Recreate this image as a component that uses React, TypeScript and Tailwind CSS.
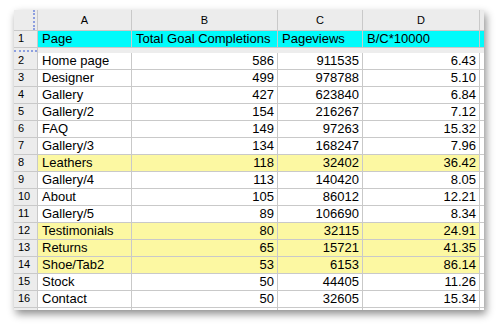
const rows: [number, string, string, string, string, boolean][] = [
  [2, 'Home page', '586', '911535', '6.43', false],
  [3, 'Designer', '499', '978788', '5.10', false],
  [4, 'Gallery', '427', '623840', '6.84', false],
  [5, 'Gallery/2', '154', '216267', '7.12', false],
  [6, 'FAQ', '149', '97263', '15.32', false],
  [7, 'Gallery/3', '134', '168247', '7.96', false],
  [8, 'Leathers', '118', '32402', '36.42', true],
  [9, 'Gallery/4', '113', '140420', '8.05', false],
  [10, 'About', '105', '86012', '12.21', false],
  [11, 'Gallery/5', '89', '106690', '8.34', false],
  [12, 'Testimonials', '80', '32115', '24.91', true],
  [13, 'Returns', '65', '15721', '41.35', true],
  [14, 'Shoe/Tab2', '53', '6153', '86.14', true],
  [15, 'Stock', '50', '44405', '11.26', false],
  [16, 'Contact', '50', '32605', '15.34', false],
];

const grid = 'grid grid-cols-[24px_94px_146px_85px_117px_4px]';
const line = 'border-r border-b border-[#c9c9c9]';

export default function App() {
  return (
    <div className="h-[329px] w-[500px] overflow-hidden bg-white pl-[14px] pt-[10px] font-['Liberation_Sans',Arial,sans-serif] text-black">
      <div className="w-[470px] bg-[#ececec] shadow-[2px_4px_8px_rgba(0,0,0,0.45)]">
        {/* column letters */}
        <div className={`${grid} h-[21px] text-[11px]`}>
          <div className={`relative ${line} bg-[#ececec]`}>
            <div className="absolute right-[2px] top-0 h-full border-l-2 border-dotted border-[#8d9fe0]" />
          </div>
          {['A', 'B', 'C', 'D'].map((c) => (
            <div key={c} className={`${line} flex items-center justify-center bg-[#ececec]`}>
              {c}
            </div>
          ))}
          <div className="border-b border-[#c9c9c9] bg-[#ececec]" />
        </div>

        {/* row 1: titles */}
        <div className={`${grid} h-[17px]`}>
          <div className={`${line} bg-[#ececec] pl-[4px] text-[11px] leading-[14px]`}>1</div>
          {['Page', 'Total Goal Completions', 'Pageviews', 'B/C*10000'].map((t) => (
            <div key={t} className={`${line} overflow-hidden whitespace-nowrap bg-[#00fbfb] pl-[4px] text-[13px] leading-[16px]`}>
              {t}
            </div>
          ))}
          <div className="border-b border-[#c9c9c9] bg-[#00fbfb]" />
        </div>

        {/* frozen pane divider */}
        <div className={`${grid} h-[5px]`}>
          <div className="relative border-r border-[#c9c9c9]">
            <div className="absolute left-0 top-[2px] w-full border-t-2 border-dotted border-[#8d9fe0]" />
          </div>
          <div className="col-span-5 bg-[#ededed]" />
        </div>

        {rows.map(([n, page, goals, views, ratio, hl]) => {
          const bg = hl ? 'bg-[#fcf8a2]' : 'bg-white';
          return (
            <div key={n} className={`${grid} h-[17px] text-[13px] leading-[16px]`}>
              <div className={`${line} bg-[#ececec] pl-[4px] text-[11px] leading-[14px]`}>{n}</div>
              <div className={`${line} ${bg} pl-[4px]`}>{page}</div>
              <div className={`${line} ${bg} pr-[3px] text-right`}>{goals}</div>
              <div className={`${line} ${bg} pr-[3px] text-right`}>{views}</div>
              <div className={`${line} ${bg} pr-[3px] text-right`}>{ratio}</div>
              <div className="border-b border-[#c9c9c9] bg-white" />
            </div>
          );
        })}

        {/* sliver of the next row */}
        <div className={`${grid} h-[2px]`}>
          <div className="border-r border-[#c9c9c9] bg-[#ececec]" />
          <div className="border-r border-[#c9c9c9] bg-white" />
          <div className="border-r border-[#c9c9c9] bg-white" />
          <div className="border-r border-[#c9c9c9] bg-white" />
          <div className="border-r border-[#c9c9c9] bg-white" />
          <div className="bg-white" />
        </div>
      </div>
    </div>
  );
}
